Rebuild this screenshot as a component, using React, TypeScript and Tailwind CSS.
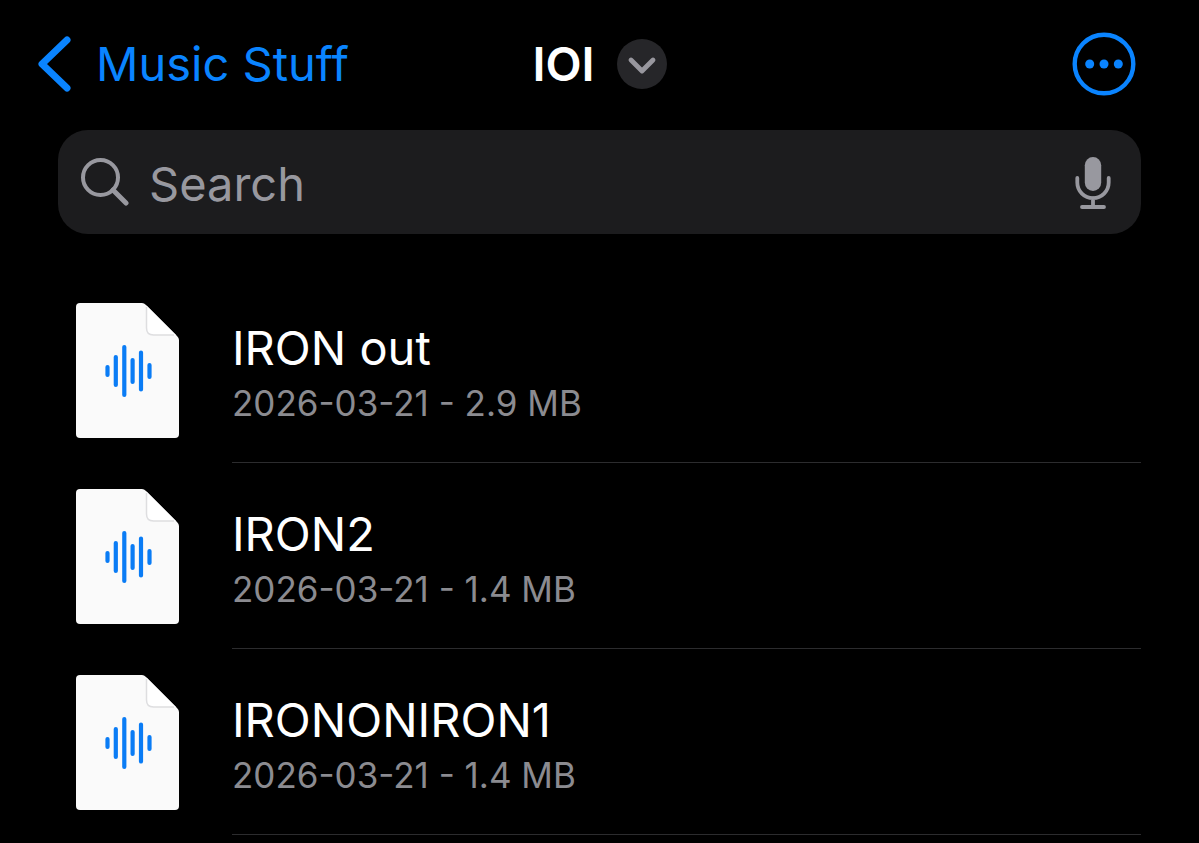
import React from 'react'

type AudioFile = {
  name: string
  date: string
  size: string
}

const files: AudioFile[] = [
  { name: 'IRON out', date: '2026-03-21', size: '2.9 MB' },
  { name: 'IRON2', date: '2026-03-21', size: '1.4 MB' },
  { name: 'IRONONIRON1', date: '2026-03-21', size: '1.4 MB' },
]

const BackIcon = () => (
  <svg className="h-14 w-[34px] shrink-0" viewBox="0 0 34 56" fill="none" aria-hidden="true">
    <path d="M29 4 4 28 29 52" stroke="currentColor" strokeWidth="7" strokeLinecap="round" strokeLinejoin="round" />
  </svg>
)

const ChevronIcon = () => (
  <svg className="size-[50px]" viewBox="0 0 50 50" fill="none" aria-hidden="true">
    <path d="M14 21 25 32 36 21" stroke="#98979e" strokeWidth="4.8" strokeLinecap="round" strokeLinejoin="round" />
  </svg>
)

const MoreIcon = () => (
  <svg className="size-16" viewBox="0 0 64 64" fill="none" aria-hidden="true">
    <circle cx="32" cy="32" r="29.3" stroke="currentColor" strokeWidth="4.4" />
    <g fill="currentColor">
      <circle cx="17.7" cy="32" r="4.5" />
      <circle cx="32" cy="32" r="4.5" />
      <circle cx="46.3" cy="32" r="4.5" />
    </g>
  </svg>
)

const SearchIcon = () => (
  <svg className="size-12 shrink-0" viewBox="0 0 48 48" fill="none" stroke="currentColor" aria-hidden="true">
    <circle cx="19.5" cy="19.5" r="17.5" strokeWidth="4" />
    <path d="M32 32 45 45" strokeWidth="5" strokeLinecap="round" />
  </svg>
)

const MicIcon = () => (
  <svg className="h-[54px] w-9" viewBox="0 0 36 54" fill="none" aria-hidden="true">
    <rect x="9.8" y="2" width="16.4" height="34" rx="8.2" fill="currentColor" />
    <path
      d="M2.3 23v4.500a15.7 15.7 0 0 0 31.4 0V23M18 43V52M7 52h22"
      stroke="currentColor"
      strokeWidth="3.8"
      strokeLinecap="round"
    />
  </svg>
)

const FileIcon = () => (
  <svg className="h-[136px] w-[103px] shrink-0" viewBox="0 0 103 136" fill="none" aria-hidden="true">
    <path d="M4 0H66Q68 0 70 2L101 33Q103 35 103 37V131Q103 135 99 135H4Q0 135 0 131V4Q0 0 4 0Z" fill="#fafafa" />
    <path d="M70.5 2.5V25Q70.5 32 77.5 32H100Z" fill="#fff" />
    <path d="M70.5 4V25Q70.5 32 77.5 32H98" stroke="#dedee0" strokeWidth="1.5" />
    <path
      d="M31.5 64v8M39.8 54v28M48.3 44v48M56.6 57v22M65 49.5v37M73.5 62v12"
      stroke="#0a7cf5"
      strokeWidth="4.2"
      strokeLinecap="round"
    />
  </svg>
)

const FileRow = ({ file }: { file: AudioFile }) => (
  <li>
    <a href="#" className="flex items-start gap-[53px]">
      <span className="pt-[26px]">
        <FileIcon />
      </span>
      <span className="flex min-w-0 flex-1 flex-col border-b border-[#2c2c2e] pt-[41px] pb-[34px]">
        <span className="truncate text-[47px] leading-[60px] text-white">{file.name}</span>
        <span className="truncate text-[35px] leading-[50px] text-[#8b8b90]">
          {file.date} - {file.size}
        </span>
      </span>
    </a>
  </li>
)

const App = () => (
  <div className="min-h-screen bg-black font-['Inter','Liberation_Sans',sans-serif]">
    <header className="grid grid-cols-[1fr_auto_1fr] items-center px-[38px] py-8 text-[#0a84ff]">
      <a href="#" className="flex items-center gap-6 text-[47px] leading-[64px]">
        <BackIcon />
        Music Stuff
      </a>
      <div className="flex items-center gap-[22px]">
        <h1 className="text-[47px] leading-[64px] font-semibold text-white">IOI</h1>
        <button type="button" aria-label="Folder options" className="rounded-full bg-[#262629]">
          <ChevronIcon />
        </button>
      </div>
      <button type="button" aria-label="More" className="mr-[25px] justify-self-end">
        <MoreIcon />
      </button>
    </header>

    <main className="px-[58px] pt-[2px]">
      <div className="flex h-[104px] items-center gap-5 rounded-[30px] bg-[#1c1c1e] pr-[30px] pl-[23px] text-[#98989f]">
        <SearchIcon />
        <input
          type="search"
          aria-label="Search"
          placeholder="Search"
          className="min-w-0 flex-1 bg-transparent pt-1 text-[47px] leading-[60px] outline-none placeholder:text-[#98989f]"
        />
        <button type="button" aria-label="Dictate">
          <MicIcon />
        </button>
      </div>

      <ul className="mt-[43px] pl-[18px]">
        {files.map((file) => (
          <FileRow key={file.name} file={file} />
        ))}
      </ul>
    </main>
  </div>
)

export default App
